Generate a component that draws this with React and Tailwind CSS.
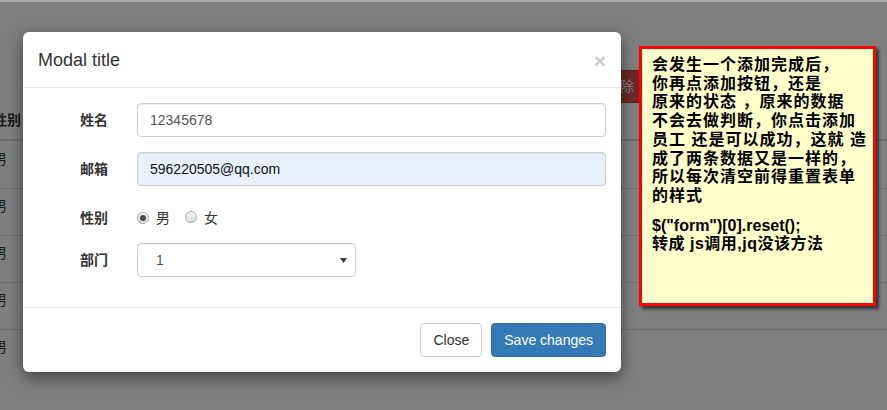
import React from "react";

const FONT = { fontFamily: '"Liberation Sans", Arial, "Noto Sans CJK SC", sans-serif' };

function Radio({ checked }) {
  return (
    <span className="relative inline-flex h-[12px] w-[12px] items-center justify-center rounded-full border border-[#a9a9a9] bg-gradient-to-b from-[#f7f7f7] to-[#dadada]">
      {checked && <span className="h-[6px] w-[6px] rounded-full bg-[#4a4a4a]" />}
    </span>
  );
}

export default function App() {
  const rows = [0, 1, 2, 3, 4];
  return (
    <div className="relative h-[410px] w-[887px] overflow-hidden bg-white text-[14px] text-[#333]" style={FONT}>
      {/* background page */}
      <div className="flex flex-col">
        <div className="mt-[70px] flex h-[33px] pl-[593px]">
          <div className="flex h-[33px] w-[54px] items-center justify-center rounded-[4px] border border-[#d43f3a] bg-[#d9534f] text-white">
            删除
          </div>
        </div>
        <div className="flex h-[38px] items-start border-b-2 border-[#ddd] pt-[7px]">
          <span className="ml-[-7px] font-bold leading-[20px]">性别</span>
        </div>
        {rows.map((r) => (
          <div
            key={r}
            className={
              r === 0
                ? "flex h-[47px] items-start pt-[8px]"
                : "flex h-[47px] items-start border-t border-[#ddd] pt-[7px]"
            }
          >
            <span className="ml-[-7px] leading-[20px]">男</span>
          </div>
        ))}
      </div>

      {/* backdrop */}
      <div className="absolute inset-0 bg-black/50" />
      <div className="absolute left-0 right-0 top-0 h-[2px] bg-[#a9a9a9]" />

      {/* modal */}
      <div className="absolute left-[23px] top-[32px] flex w-[598px] flex-col rounded-[6px] bg-white shadow-[0_5px_15px_rgba(0,0,0,0.5)]">
        <div className="flex h-[56px] items-start justify-between border-b border-[#e5e5e5] px-[15px] pt-[15px]">
          <span className="text-[18px] leading-[26px] text-[#333]">Modal title</span>
          <span className="mt-[3px] text-[21px] font-bold leading-[21px] text-black opacity-20">×</span>
        </div>
        <div className="flex flex-col gap-[15px] px-[15px] pb-[30px] pt-[15px]">
          <div className="flex items-center">
            <span className="w-[85px] pr-[15px] text-right font-bold">姓名</span>
            <div className="ml-[14px] flex h-[34px] flex-1 items-center rounded-[4px] border border-[#ccc] bg-white px-[12px] text-[#555] shadow-[inset_0_1px_1px_rgba(0,0,0,0.075)]">
              12345678
            </div>
          </div>
          <div className="flex items-center">
            <span className="w-[85px] pr-[15px] text-right font-bold">邮箱</span>
            <div className="ml-[14px] flex h-[34px] flex-1 items-center rounded-[4px] border border-[#ccc] bg-[#e8f0fe] px-[12px] text-[#111] shadow-[inset_0_1px_1px_rgba(0,0,0,0.075)]">
              596220505@qq.com
            </div>
          </div>
          <div className="flex h-[27px] items-center pt-[7px]">
            <span className="w-[85px] pr-[15px] text-right font-bold">性别</span>
            <div className="ml-[14px] flex items-center">
              <Radio checked />
              <span className="ml-[7px] text-[#333]">男</span>
              <span className="ml-[15px]"><Radio /></span>
              <span className="ml-[7px] text-[#333]">女</span>
            </div>
          </div>
          <div className="flex items-center">
            <span className="w-[85px] pr-[15px] text-right font-bold">部门</span>
            <div className="ml-[14px] flex h-[34px] w-[219px] items-center justify-between rounded-[4px] border border-[#ccc] bg-white pl-[18px] pr-[6px] text-[#555] shadow-[inset_0_1px_1px_rgba(0,0,0,0.075)]">
              <span>1</span>
              <svg width="7" height="5" viewBox="0 0 7 5" className="mr-[2px]">
                <path d="M0 0 H7 L3.5 5 Z" fill="#3a3a3a" />
              </svg>
            </div>
          </div>
        </div>
        <div className="flex items-center justify-end gap-[9px] border-t border-[#e5e5e5] p-[15px]">
          <div className="flex h-[34px] items-center rounded-[4px] border border-[#ccc] bg-white px-[12px] text-[#333]">Close</div>
          <div className="flex h-[34px] items-center rounded-[4px] border border-[#2e6da4] bg-[#337ab7] px-[12px] text-white">Save changes</div>
        </div>
      </div>

      {/* sticky note */}
      <div className="absolute left-[639px] top-[46px] h-[260px] w-[237px] border-[3px] border-[#ff0000] bg-[#ffffcc] pl-[10px] pt-[7px] font-bold text-black shadow-[3px_3px_3px_rgba(0,0,0,0.6)]">
        <div className="whitespace-nowrap text-[16px] leading-[18.7px] tracking-[1px]">
          <div>会发生一个添加完成后，</div>
          <div>你再点添加按钮，还是</div>
          <div>原来的状态 ，原来的数据</div>
          <div>不会去做判断，你点击添加</div>
          <div>员工 还是可以成功，这就 造</div>
          <div>成了两条数据又是一样的，</div>
          <div>所以每次清空前得重置表单</div>
          <div>的样式</div>
        </div>
        <div className="mt-[11px] whitespace-nowrap text-[16px] leading-[18.7px]">
          <div>$("form")[0].reset();</div>
          <div className="tracking-[0.5px]">转成 js调用,jq没该方法</div>
        </div>
      </div>
    </div>
  );
}
